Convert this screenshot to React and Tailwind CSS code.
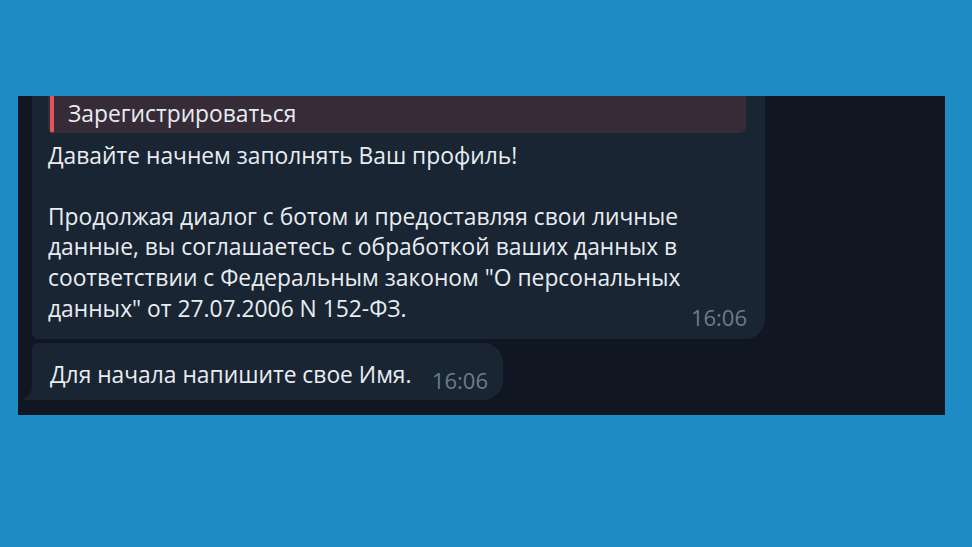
export default function App() {
  return (
    <div
      className="w-[972px] h-[547px] bg-[#1f8bc5] pt-[96px] pl-[18px]"
      style={{ fontFamily: '"Open Sans", "Noto Sans", sans-serif' }}
    >
      <div className="w-[927px] h-[319px] bg-[#111722] overflow-hidden pl-[14px] flex flex-col gap-[4px]">
        {/* first message, scrolled so the top is cut */}
        <div className="w-[733px] mt-[-41px] bg-[#1a2533] rounded-tl-[20px] rounded-tr-[20px] rounded-br-[20px] rounded-bl-[6px] pt-[8px] pl-[16px] pr-[18px] pb-[7px] text-[22.8px] leading-[30.6px] text-[#e8edf2]">
          <div className="w-[698px] bg-[#372b38] rounded-[6px] flex overflow-hidden">
            <div className="w-[4px] bg-[#e0565b] rounded-[2px] ml-[2px]"></div>
            <div className="pl-[14px] pt-[6px] pb-[3px]">
              <div className="h-[30px]"></div>
              <div>Зарегистрироваться</div>
            </div>
          </div>
          <div className="mt-[8px]">
            Давайте начнем заполнять Ваш профиль!
            <br />
            <br />
            Продолжая диалог с ботом и предоставляя свои личные
            <br />
            данные, вы соглашаетесь с обработкой ваших данных в
            <br />
            соответствии с Федеральным законом "О персональных
            <br />
            данных" от 27.07.2006 N 152-ФЗ.
            <span className="float-right mt-[8px] text-[#6b7c8c] text-[22px] leading-[30px]">16:06</span>
          </div>
        </div>

        {/* second message with tail */}
        <div className="relative w-[471px] h-[57px] bg-[#1a2533] rounded-tl-[6px] rounded-tr-[20px] rounded-br-[20px] flex items-start pl-[18px] pr-[15px] pt-[17px] text-[22.8px] leading-[30px] text-[#e8edf2]">
          <span>Для начала напишите свое Имя.</span>
          <span className="ml-auto mt-[5px] text-[#6b7c8c] text-[22px] leading-[30px]">16:06</span>
          <svg className="absolute left-[-10px] bottom-0" width="11" height="16" viewBox="0 0 11 16">
            <path d="M11 0 L11 16 L0 16 C6 14 10 8 11 0 Z" fill="#1a2533" />
          </svg>
        </div>
      </div>
    </div>
  );
}
